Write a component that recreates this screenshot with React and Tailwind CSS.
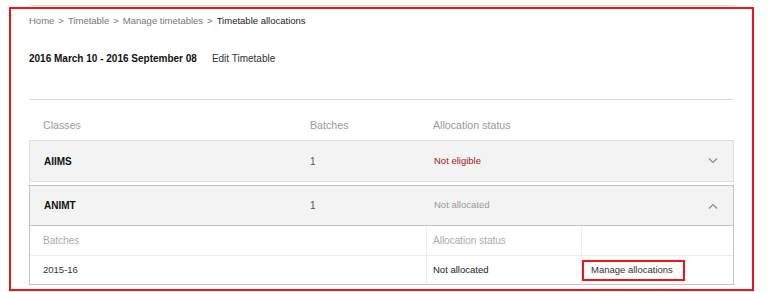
import React from 'react';

function Chevron({ up }) {
    return (
        <svg width="10" height="6" viewBox="0 0 10 6" className="text-[#8a8a8a]">
            <polyline
                points={up ? '1,5.5 5,1.5 9,5.5' : '1,0.5 5,4.5 9,0.5'}
                fill="none"
                stroke="currentColor"
                strokeWidth="1.2"
            />
        </svg>
    );
}

function ClassRow({ name, batches, status, statusClass, open, children }) {
    return (
        <div className={`border ${open ? 'border-[#c4c4c4] mt-[3px]' : 'border-[#dedede]'}`}>
            <div className={`h-[40px] flex items-center bg-[#f3f3f3] ${open ? 'border-b border-[#c4c4c4]' : ''}`}>
                <div className="w-[280px] pl-[14px] text-[10px] font-bold text-[#111]">{name}</div>
                <div className="w-[124px] text-[10px] text-[#555]">{batches}</div>
                <div className={`flex-1 text-[9.5px] ${statusClass}`}>{status}</div>
                <div className="pr-[15px] flex items-center">
                    <Chevron up={open} />
                </div>
            </div>
            {children}
        </div>
    );
}

export default function App() {
    return (
        <div className="w-[768px] h-[292px] bg-white overflow-hidden" style={{ fontFamily: '"Liberation Sans", Arial, sans-serif' }}>
            <div className="ml-[29px] w-[706px] h-px bg-[#dcdcdc] mt-[5px]" />

            <div className="ml-[9px] mt-px w-[745px] h-[284px] border-2 border-[#f01414] px-[18px]">
                {/* breadcrumb */}
                <div className="h-[24px] flex items-center gap-[4px] text-[9.5px] text-[#777]">
                    <span>Home</span>
                    <span>&gt;</span>
                    <span>Timetable</span>
                    <span>&gt;</span>
                    <span>Manage timetables</span>
                    <span>&gt;</span>
                    <span className="text-[#222]">Timetable allocations</span>
                </div>

                <div className="mt-[15px] h-[20px] flex items-center text-[10px]">
                    <span className="font-bold text-[#111]">2016 March 10 - 2016 September 08</span>
                    <span className="ml-[15px] text-[#333]">Edit Timetable</span>
                </div>

                <div className="mt-[31px] h-px bg-[#dadada]" />

                {/* headers */}
                <div className="h-[40px] pt-[10px] flex items-center text-[10.67px] text-[#9a9a9a]">
                    <div className="w-[281px] pl-[14px]">Classes</div>
                    <div className="w-[123px]">Batches</div>
                    <div className="flex-1">Allocation status</div>
                </div>

                <ClassRow name="AIIMS" batches="1" status="Not eligible" statusClass="text-[#a81616]" />

                <ClassRow name="ANIMT" batches="1" status="Not allocated" statusClass="text-[#9a9a9a]" open>
                    <div className="grid grid-cols-[397px_155px_1fr]">
                        <div className="h-[30px] flex items-center pl-[13px] text-[10px] text-[#aaa] border-b border-r border-[#ececec]">Batches</div>
                        <div className="h-[30px] flex items-center pl-[6px] text-[10px] text-[#aaa] border-b border-r border-[#ececec]">Allocation status</div>
                        <div className="h-[30px] border-b border-[#ececec]" />

                        <div className="h-[28px] flex items-center pl-[13px] text-[9.5px] text-[#333] border-r border-[#ececec]">2015-16</div>
                        <div className="h-[28px] flex items-center pl-[6px] text-[9.5px] text-[#222] border-r border-[#ececec]">Not allocated</div>
                        <div className="h-[28px] flex items-center">
                            <span className="h-[21px] w-[103px] flex items-center pl-[7px] border-2 border-[#f01414] text-[9.5px] text-[#333]">
                                Manage allocations
                            </span>
                        </div>
                    </div>
                </ClassRow>
            </div>
        </div>
    );
}
